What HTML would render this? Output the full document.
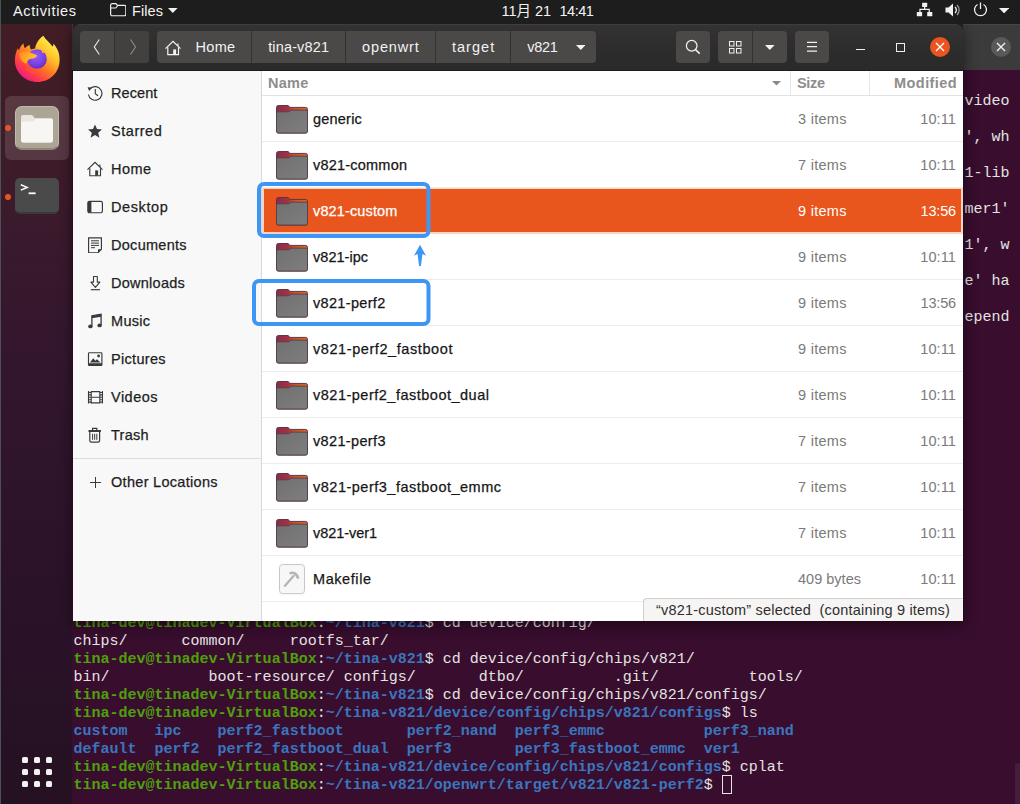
<!DOCTYPE html>
<html><head><meta charset="utf-8"><title>Files</title>
<style>
*{box-sizing:border-box;margin:0;padding:0}
html,body{width:1020px;height:804px;overflow:hidden;background:#380d2e;font-family:"Liberation Sans","Noto Sans CJK SC",sans-serif;}
.abs{position:absolute}
i{font-style:normal}
#topbar{position:absolute;left:0;top:0;width:1020px;height:24px;background:#1d1d1d;color:#f4f4f4;font-size:14.5px;line-height:24px}
#topbar span{position:absolute;top:-1px;white-space:nowrap}
#dock{position:absolute;left:0;top:24px;width:72px;height:780px;background:linear-gradient(180deg,#431d25 0%,#3f1c27 14%,#3a1a2c 26%,#32162e 45%,#2a1228 75%,#251122 100%)}
#edge{position:absolute;left:0;top:0;width:1px;height:804px;background:#4b5158}
#term{position:absolute;left:72px;top:24px;width:948px;height:780px;background:#380d2e}
#termhead{position:absolute;left:0;top:0;width:948px;height:46px;background:#3c3b3b;box-shadow:inset 0 1px 0 rgba(255,255,255,0.06)}
.tl{position:absolute;left:1.6px;white-space:pre;font-family:"Liberation Mono",monospace;font-size:15px;line-height:18px;color:#e4e4e2;height:18px}
.tl b.g{color:#4fa00c}.tl b.b{color:#3b76bd}
.cur{position:absolute;top:-2px;width:10px;height:19px;border:1px solid #e4e4e2}
#win{position:absolute;left:73px;top:24px;width:890px;height:597px;background:#2f2e2e;border-radius:8px 8px 0 0;overflow:hidden;box-shadow:0 3px 14px rgba(0,0,0,0.55)}
#head{position:absolute;left:0;top:0;width:890px;height:47px;background:linear-gradient(180deg,#343232 0%,#2d2c2c 60%,#2b2a2a 100%);border-bottom:1px solid #1c1c1c;box-shadow:inset 0 1px 0 rgba(255,255,255,0.06)}
.hb{position:absolute;top:7px;height:32px;background:#4a4948;border-radius:4px}
.hs{position:absolute;top:7px;width:1px;height:32px;background:#333232}
.ht{position:absolute;top:7px;height:32px;line-height:33px;color:#f2f2f2;font-size:14.5px;white-space:nowrap}
#side{position:absolute;left:0;top:47px;width:189px;height:550px;background:#f8f8f8;border-right:1px solid #d9d9d9}
.sl{position:absolute;left:38px;font-size:14.5px;color:#1e1e1e;white-space:nowrap;line-height:20px;-webkit-text-stroke-width:0.25px}
#list{position:absolute;left:189px;top:47px;width:701px;height:550px;background:#fff}
#colhead{position:absolute;left:0;top:0;width:701px;height:25px;border-bottom:1px solid #e2e2e2;background:#fff}
.ch{position:absolute;top:2px;font-size:14.5px;font-weight:bold;color:#8d8d8d;line-height:20px;white-space:nowrap}
.cd{position:absolute;top:0;width:1px;height:24px;background:#e6e6e6}
.row{position:absolute;left:0;width:701px;height:46px;border-bottom:1px solid #ececec}
.row .n{position:absolute;left:51px;top:13px;font-size:14.5px;line-height:20px;color:#161616;white-space:nowrap;-webkit-text-stroke-width:0.25px}
.row .s{position:absolute;left:536px;top:13px;font-size:14.5px;line-height:20px;color:#7a7a7a;white-space:nowrap}
.row .m{position:absolute;right:7px;top:13px;font-size:14.5px;line-height:20px;color:#7a7a7a;white-space:nowrap}
.row.sel{background:#e9561d;border:1px solid #fbd3c5;border-width:1px 2px 2px 2px}
.row.sel .fi{left:12px;top:8px}
.row.sel .n{left:49px;top:12px}.row.sel .s{left:534px;top:12px}.row.sel .m{right:5px;top:12px}
.row.sel .n,.row.sel .s,.row.sel .m{color:#fff}
.fi{position:absolute;left:14px;top:9px}
#status{position:absolute;left:570px;top:574px;width:320px;height:23px;background:#f6f5f4;border-top:1px solid #cfcfcf;border-left:1px solid #cfcfcf;border-radius:4px 0 0 0;font-size:14.5px;line-height:23px;color:#2e2e2e;padding-left:12px;white-space:nowrap}

</style></head><body>
<div id="term">
<div id="termhead"><div class="abs" style="left:919px;top:13px;width:20px;height:20px;border-radius:10px;background:#5a5959"></div><svg class="abs" style="left:924px;top:18px" width="10" height="10" viewBox="0 0 10 10"><path d="M1 1l8 8M9 1l-8 8" stroke="#f0f0f0" stroke-width="1.4"/></svg></div>
<div class="abs" style="left:943px;top:739px;width:6px;height:42px;border-radius:3px;background:rgba(255,255,255,0.07)"></div>
<div class="tl" style="top:591px"><b class="g">tina-dev@tinadev-VirtualBox</b>:<b class="b">~/tina-v821</b>$ cd device/config/</div>
<div class="tl" style="top:609px">chips/      common/     rootfs_tar/</div>
<div class="tl" style="top:627px"><b class="g">tina-dev@tinadev-VirtualBox</b>:<b class="b">~/tina-v821</b>$ cd device/config/chips/v821/</div>
<div class="tl" style="top:645px">bin/           boot-resource/ configs/       dtbo/          .git/          tools/</div>
<div class="tl" style="top:663px"><b class="g">tina-dev@tinadev-VirtualBox</b>:<b class="b">~/tina-v821</b>$ cd device/config/chips/v821/configs/</div>
<div class="tl" style="top:681px"><b class="g">tina-dev@tinadev-VirtualBox</b>:<b class="b">~/tina-v821/device/config/chips/v821/configs</b>$ ls</div>
<div class="tl" style="top:699px"><b class="b">custom   ipc    perf2_fastboot       perf2_nand  perf3_emmc           perf3_nand</b></div>
<div class="tl" style="top:717px"><b class="b">default  perf2  perf2_fastboot_dual  perf3       perf3_fastboot_emmc  ver1</b></div>
<div class="tl" style="top:735px"><b class="g">tina-dev@tinadev-VirtualBox</b>:<b class="b">~/tina-v821/device/config/chips/v821/configs</b>$ cplat</div>
<div class="tl" style="top:753px"><b class="g">tina-dev@tinadev-VirtualBox</b>:<b class="b">~/tina-v821/openwrt/target/v821/v821-perf2</b>$ <i class="cur"></i></div>
<div class="tl" style="top:69px;left:892.600px">video</div>
<div class="tl" style="top:105px;left:892.600px">', wh</div>
<div class="tl" style="top:141px;left:892.600px">1-lib</div>
<div class="tl" style="top:177px;left:892.600px">mer1'</div>
<div class="tl" style="top:213px;left:892.600px">1', w</div>
<div class="tl" style="top:249px;left:892.600px">e' ha</div>
<div class="tl" style="top:285px;left:892.600px">epend</div>
</div>
<div id="dock">
<svg class="abs" style="left:8px;top:6px" width="58" height="58" viewBox="0 0 58 58"><defs><linearGradient id="ff1" x1="0.85" y1="0.1" x2="0.2" y2="0.95"><stop offset="0" stop-color="#fff14a"/><stop offset="0.3" stop-color="#ffc02c"/><stop offset="0.55" stop-color="#ff7a22"/><stop offset="0.8" stop-color="#ff3a4a"/><stop offset="1" stop-color="#ee168c"/></linearGradient><radialGradient id="ff2" cx="0.45" cy="0.35" r="0.75"><stop offset="0" stop-color="#9a5cf5"/><stop offset="0.6" stop-color="#7a3fe0"/><stop offset="1" stop-color="#5527b8"/></radialGradient><linearGradient id="ff3" x1="0" y1="0" x2="1" y2="0.4"><stop offset="0" stop-color="#ff8420"/><stop offset="0.5" stop-color="#ffa826"/><stop offset="1" stop-color="#ffc832"/></linearGradient></defs><path d="M35.400 5.800C37 9 41 12 44.500 16.500c1-0.500 1-2 0.800-3C49.500 18 52 24 51.600 31 51 43 41.500 52 29.500 52S7.500 43 6.900 31.500C6.700 26 8 21.500 10 18c0.200 1 0.500 2 1 2.500 0.500-2.500 2.500-5.500 4.500-7.200 0 1.800 0.500 3.800 1.500 5 1.200-1.400 3-2.800 4.600-3.500 0 1.500 0.500 3.500 1.500 5 1-0.800 2.500-1.300 4-1.400C27.500 14.500 30.500 9 35.400 5.800z" fill="url(#ff1)"/><circle cx="29" cy="29" r="9.800" fill="url(#ff2)"/><path d="M11 23.500c2.500-2 6.500-2.700 10-1.500 3 1 5.500 2.300 8 3.400-0.300 2-3 3.200-5.800 3.400-2.700 0.400-4.700 2.400-4.900 5-2-0.500-4.500-2.500-5.500-4.500-0.900-2-1.600-4-1.800-5.800z" fill="url(#ff3)"/><path d="M18.300 33.800c0.300 3.500 2.800 6.200 6.500 7.200 3 0.800 6.500 0.300 9-1.500-2.500 3.500-7.500 5-12 3.200-3.500-1.500-5-5-3.500-8.900z" fill="#ff5a2e" opacity="0.55"/><path d="M33 19.500c2.500 0.500 4.500 1.800 5.500 3.500-1.500-0.500-3-0.500-4.200 0-0.200-1.300-0.600-2.500-1.300-3.500z" fill="#ffb52a"/></svg>
<div class="abs" style="left:5px;top:72px;width:64px;height:64px;border-radius:6px;background:rgba(255,255,255,0.125)"></div>
<div class="abs" style="left:15px;top:82px;width:44px;height:44px;border-radius:7px;background:#aca595;border:1.5px solid #c2bbad;border-bottom:2px solid #8f8778"></div>
<svg class="abs" style="left:20px;top:89.500px" width="34" height="29.500" viewBox="0 0 34 28" preserveAspectRatio="none"><path d="M1 3a2 2 0 0 1 2-2h9l3 3h16a2 2 0 0 1 2 2v19a2 2 0 0 1-2 2h-28a2 2 0 0 1-2-2z" fill="#e9e6df"/><path d="M1 9a2 2 0 0 1 2-2h10l3-2.500h15a2 2 0 0 1 2 2v18.500a2 2 0 0 1-2 2h-28a2 2 0 0 1-2-2z" fill="#f7f6f3"/></svg>
<div class="abs" style="left:5px;top:101px;width:6px;height:6px;border-radius:3px;background:#e95420"></div>
<div class="abs" style="left:15px;top:154px;width:44px;height:36px;border-radius:5px;background:#4b4a4a;border-bottom:2px solid #3a3939"></div>
<svg class="abs" style="left:20px;top:159px" width="20" height="14" viewBox="0 0 20 14"><path d="M0.800 1.700l6.400 2.700-6.400 2.700" fill="none" stroke="#fff" stroke-width="1.500"/><path d="M8.600 10.300h7" stroke="#fff" stroke-width="1.800"/></svg>
<div class="abs" style="left:5px;top:169.500px;width:6px;height:6px;border-radius:3px;background:#e95420"></div>
<svg class="abs" style="left:22px;top:733px" width="30" height="30" viewBox="0 0 30 30"><rect x="0" y="0" width="6" height="6" rx="1.500" fill="#f2f2f2"/><rect x="12" y="0" width="6" height="6" rx="1.500" fill="#f2f2f2"/><rect x="24" y="0" width="6" height="6" rx="1.500" fill="#f2f2f2"/><rect x="0" y="12" width="6" height="6" rx="1.500" fill="#f2f2f2"/><rect x="12" y="12" width="6" height="6" rx="1.500" fill="#f2f2f2"/><rect x="24" y="12" width="6" height="6" rx="1.500" fill="#f2f2f2"/><rect x="0" y="24" width="6" height="6" rx="1.500" fill="#f2f2f2"/><rect x="12" y="24" width="6" height="6" rx="1.500" fill="#f2f2f2"/><rect x="24" y="24" width="6" height="6" rx="1.500" fill="#f2f2f2"/></svg>
</div>
<div class="abs" style="left:73px;top:24px;width:890px;height:12px;background:#232323"></div>
<div id="win">
<div id="head">
<div class="hb" style="left:7px;width:69px"></div><div class="hb" style="left:42px;width:34px;background:#424140;border-radius:0 4px 4px 0"></div><i class="hs" style="left:41px"></i>
<svg class="abs" style="left:7px;top:7px" width="69" height="32" viewBox="0 0 69 32"><path d="M19.300 8.500L14.300 16l5 7.500" fill="none" stroke="#f0f0f0" stroke-width="1.1"/><path d="M50.500 8.500l5 7.500-5 7.500" fill="none" stroke="#8a8a8a" stroke-width="1.1"/></svg>
<div class="hb" style="left:84px;width:439px"></div>
<i class="hs" style="left:178px"></i>
<i class="hs" style="left:272px"></i>
<i class="hs" style="left:362px"></i>
<i class="hs" style="left:437px"></i>
<svg class="abs" style="left:92px;top:15.500px" width="16" height="16" viewBox="0 0 16 16"><path d="M0.500 8.600L8 1.300l7.500 7.300" fill="none" stroke="#f4f4f4" stroke-width="1.200"/><path d="M2.800 7.200V14.700h10.700V7.200" fill="none" stroke="#f4f4f4" stroke-width="1.200"/><path d="M12.900 6V3.400" stroke="#f4f4f4" stroke-width="1.100"/><rect x="8.200" y="9.400" width="2.900" height="5.300" fill="#f4f4f4"/></svg>
<span class="ht" style="left:122.5px;letter-spacing:0.30px">Home</span>
<span class="ht" style="left:195.2px;letter-spacing:0.14px">tina-v821</span>
<span class="ht" style="left:289.1px;letter-spacing:0.85px">openwrt</span>
<span class="ht" style="left:378.9px;letter-spacing:1.06px">target</span>
<span class="ht" style="left:454.2px;letter-spacing:-0.28px">v821</span>
<svg class="abs" style="left:502.500px;top:21px" width="9.600" height="4.900" viewBox="0 0 11 6" preserveAspectRatio="none"><path d="M0 0h11L5.500 6z" fill="#f4f4f4"/></svg>
<div class="hb" style="left:603px;width:34px"></div>
<svg class="abs" style="left:611px;top:14px" width="18" height="18" viewBox="0 0 18 18"><circle cx="7.700" cy="7.700" r="5.300" fill="none" stroke="#f0f0f0" stroke-width="1.250"/><path d="M11.500 11.600L15.700 15.600" stroke="#f0f0f0" stroke-width="1.500"/></svg>
<div class="hb" style="left:645px;width:69px"></div><i class="hs" style="left:679px"></i>
<svg class="abs" style="left:656px;top:17px" width="14" height="14" viewBox="0 0 14 14"><g fill="none" stroke="#f0f0f0" stroke-width="1"><rect x="0.500" y="0.500" width="4.500" height="4.500"/><rect x="7.500" y="0.500" width="4.500" height="4.500"/><rect x="0.500" y="7.500" width="4.500" height="4.500"/><rect x="7.500" y="7.500" width="4.500" height="4.500"/></g></svg>
<svg class="abs" style="left:692px;top:21px" width="9.600" height="4.900" viewBox="0 0 11 6" preserveAspectRatio="none"><path d="M0 0h11L5.500 6z" fill="#f4f4f4"/></svg>
<div class="hb" style="left:722px;width:34px"></div>
<svg class="abs" style="left:734px;top:17px" width="10" height="12" viewBox="0 0 10 12"><path d="M0 1.300h10M0 5.700h10M0 10.100h10" stroke="#f0f0f0" stroke-width="1.200"/></svg>
<div class="abs" style="left:783px;top:25px;width:9px;height:1px;background:#f0f0f0"></div>
<div class="abs" style="left:823px;top:19px;width:9px;height:9px;border:1px solid #f0f0f0"></div>
<div class="abs" style="left:857px;top:13px;width:20px;height:20px;border-radius:10px;background:#e95420"></div>
<svg class="abs" style="left:862px;top:18px" width="10" height="10" viewBox="0 0 10 10"><path d="M1 1l8 8M9 1l-8 8" stroke="#fff" stroke-width="1.4"/></svg>
</div>
<div id="side">
<svg class="abs" style="left:14px;top:13.5px" width="16" height="16" viewBox="0 0 16 16"><path d="M3.300 3.600A6.800 6.800 0 1 1 1.400 9.500" fill="none" stroke="#3a3a3a" stroke-width="1.150"/><path d="M8.300 4v4.600l2.700 2.100" fill="none" stroke="#3a3a3a" stroke-width="1.150"/><path d="M0.600 2.200l4.600 0.300-3.100 3.500z" fill="#3a3a3a"/></svg><span class="sl" style="top:11.5px;letter-spacing:0.09px">Recent</span>
<svg class="abs" style="left:14px;top:51.5px" width="16" height="16" viewBox="0 0 16 16"><path d="M8 1.400l2 4.700 5 0.400-3.800 3.300 1.200 4.900L8 12.100 3.600 14.700l1.200-4.900L1 6.500l5-0.400z" fill="#3a3a3a"/></svg><span class="sl" style="top:49.5px;letter-spacing:0.54px">Starred</span>
<svg class="abs" style="left:14px;top:89.5px" width="16" height="16" viewBox="0 0 16 16"><path d="M0.500 8.600L8 1.300l7.500 7.300" fill="none" stroke="#3a3a3a" stroke-width="1.150"/><path d="M2.800 7.200V14.700h10.700V7.200" fill="none" stroke="#3a3a3a" stroke-width="1.150"/><path d="M12.900 6V3.400" stroke="#3a3a3a" stroke-width="1.100"/><rect x="8.200" y="9.400" width="2.900" height="5.300" fill="#3a3a3a"/></svg><span class="sl" style="top:87.5px;letter-spacing:0.50px">Home</span>
<svg class="abs" style="left:14px;top:127.5px" width="16" height="16" viewBox="0 0 16 16"><rect x="0.800" y="2.300" width="14.600" height="11.400" rx="1.600" fill="none" stroke="#3a3a3a" stroke-width="1.150"/><path d="M1 3.500a1 1 0 0 1 1-1h2.400v11h-2.400a1 1 0 0 1-1-1z" fill="#3a3a3a"/></svg><span class="sl" style="top:125.5px;letter-spacing:0.60px">Desktop</span>
<svg class="abs" style="left:14px;top:165.5px" width="16" height="16" viewBox="0 0 16 16"><path d="M1.600 0.800h12.800v11.500l-3.400 3.400h-9.400z" fill="none" stroke="#3a3a3a" stroke-width="1.150"/><path d="M4 3.800h8M4 6.100h8M4 8.400h8M4 10.700h4" stroke="#3a3a3a" stroke-width="1"/><path d="M14.400 12.300h-3.400v3.400z" fill="#3a3a3a"/></svg><span class="sl" style="top:163.5px;letter-spacing:0.28px">Documents</span>
<svg class="abs" style="left:14px;top:203.5px" width="16" height="16" viewBox="0 0 16 16"><path d="M6.500 1.500h3.800v5.600h2.600L8.400 12.400 3.900 7.100h2.600z" fill="none" stroke="#3a3a3a" stroke-width="1.100" stroke-linejoin="round"/><path d="M3.800 14.700h9.200" stroke="#3a3a3a" stroke-width="1.150"/></svg><span class="sl" style="top:201.5px;letter-spacing:0.26px">Downloads</span>
<svg class="abs" style="left:14px;top:241.5px" width="16" height="16" viewBox="0 0 16 16"><path d="M4.900 13V2.700l9.200-1.500V12" fill="none" stroke="#3a3a3a" stroke-width="1.300"/><path d="M4.900 2.700l9.200-1.500v2.600l-9.200 1.500z" fill="#3a3a3a"/><ellipse cx="3.400" cy="13.400" rx="2.200" ry="1.900" fill="#3a3a3a"/><ellipse cx="12.600" cy="12.400" rx="2.200" ry="1.900" fill="#3a3a3a"/></svg><span class="sl" style="top:239.5px;letter-spacing:0.31px">Music</span>
<svg class="abs" style="left:14px;top:279.5px" width="16" height="16" viewBox="0 0 16 16"><rect x="1.500" y="1.700" width="13.400" height="12.800" rx="0.800" fill="none" stroke="#3a3a3a" stroke-width="1.150"/><path d="M1.500 12.200h13.400v2.300h-13.400z" fill="#3a3a3a"/><path d="M3 11.500l3.200-4.300 2.200 2.500 1.500-1.500 3.600 3.300z" fill="#3a3a3a"/><circle cx="11.600" cy="5" r="1.400" fill="#3a3a3a"/></svg><span class="sl" style="top:277.5px;letter-spacing:0.32px">Pictures</span>
<svg class="abs" style="left:14px;top:317.5px" width="16" height="16" viewBox="0 0 16 16"><path d="M1.500 2v12.500M15.500 2v12.500M4.200 2v12.500M12.800 2v12.500" stroke="#3a3a3a" stroke-width="1.100"/><path d="M4.200 2.600h8.600M4.200 8.200h8.600M4.200 13.900h8.600" stroke="#3a3a3a" stroke-width="1.150"/><path d="M1.500 3.500h2.700M1.500 5.900h2.700M1.500 8.300h2.700M1.500 10.700h2.700M1.500 13.100h2.700M12.800 3.500h2.700M12.800 5.900h2.700M12.800 8.300h2.700M12.800 10.700h2.700M12.800 13.100h2.700" stroke="#3a3a3a" stroke-width="1.100"/></svg><span class="sl" style="top:315.5px;letter-spacing:0.48px">Videos</span>
<svg class="abs" style="left:14px;top:355.5px" width="16" height="16" viewBox="0 0 16 16"><path d="M2.800 5v8.600a1.600 1.600 0 0 0 1.600 1.600h6.600a1.600 1.600 0 0 0 1.600-1.600V5" fill="none" stroke="#3a3a3a" stroke-width="1.200"/><path d="M1.500 4h12.400" stroke="#3a3a3a" stroke-width="2"/><path d="M5.600 3.200V1.400h4.200v1.800" fill="none" stroke="#3a3a3a" stroke-width="1.200"/><path d="M5.600 6.800v6M7.700 6.800v6M9.800 6.800v6" stroke="#3a3a3a" stroke-width="1"/></svg><span class="sl" style="top:353.5px;letter-spacing:0.24px">Trash</span>
<div class="abs" style="left:0;top:387px;width:188px;height:1px;background:#dcdcdc"></div>
<svg class="abs" style="left:14px;top:403.0px" width="16" height="16" viewBox="0 0 16 16"><path d="M8.500 3v11M3 8.500h11" stroke="#3a3a3a" stroke-width="1"/></svg><span class="sl" style="top:400.5px;letter-spacing:0.30px">Other Locations</span>
</div>
<div id="list">
<div id="colhead"><span class="ch" style="left:6px;letter-spacing:0.27px">Name</span><svg class="abs" style="left:509.500px;top:10.300px" width="9" height="4.600" viewBox="0 0 10 5" preserveAspectRatio="none"><path d="M0 0h10l-5 5z" fill="#8a8a8a"/></svg><i class="cd" style="left:528px"></i><span class="ch" style="left:535px;letter-spacing:-0.31px">Size</span><i class="cd" style="left:607px"></i><span class="ch" style="right:6px;letter-spacing:0.41px">Modified</span></div>
<div class="row" style="top:25px"><svg class="fi" viewBox="0 0 32 30" width="32" height="29" preserveAspectRatio="none"><defs><linearGradient id="t0" x1="0" y1="0" x2="1" y2="0"><stop offset="0" stop-color="#8a2a50"/><stop offset="0.38" stop-color="#a5323f"/><stop offset="0.55" stop-color="#c8502c"/><stop offset="1" stop-color="#e8651f"/></linearGradient><linearGradient id="b0" x1="0" y1="0" x2="1" y2="1"><stop offset="0" stop-color="#707070"/><stop offset="1" stop-color="#7e7e7e"/></linearGradient></defs><path d="M2.5 0.5h9.5l2 2h15.5a2 2 0 0 1 2 2v22.5a2 2 0 0 1-2 2h-27a2 2 0 0 1-2-2v-24.5a2 2 0 0 1 2-2z" fill="url(#t0)" stroke="#5b3440" stroke-width="1"/><path d="M0.5 8.5a1.5 1.5 0 0 1 1.5-1.5h11l2-1.7h15a1.5 1.5 0 0 1 1.5 1.5v20.2a2 2 0 0 1-2 2h-27a2 2 0 0 1-2-2z" fill="url(#b0)" stroke="#57424a" stroke-width="1"/></svg><span class="n" style="letter-spacing:0.21px">generic</span><span class="s" style="letter-spacing:0.29px">3 items</span><span class="m" style="letter-spacing:0.10px">10:11</span></div>
<div class="row" style="top:71px"><svg class="fi" viewBox="0 0 32 30" width="32" height="29" preserveAspectRatio="none"><defs><linearGradient id="t1" x1="0" y1="0" x2="1" y2="0"><stop offset="0" stop-color="#8a2a50"/><stop offset="0.38" stop-color="#a5323f"/><stop offset="0.55" stop-color="#c8502c"/><stop offset="1" stop-color="#e8651f"/></linearGradient><linearGradient id="b1" x1="0" y1="0" x2="1" y2="1"><stop offset="0" stop-color="#707070"/><stop offset="1" stop-color="#7e7e7e"/></linearGradient></defs><path d="M2.5 0.5h9.5l2 2h15.5a2 2 0 0 1 2 2v22.5a2 2 0 0 1-2 2h-27a2 2 0 0 1-2-2v-24.5a2 2 0 0 1 2-2z" fill="url(#t1)" stroke="#5b3440" stroke-width="1"/><path d="M0.5 8.5a1.5 1.5 0 0 1 1.5-1.5h11l2-1.7h15a1.5 1.5 0 0 1 1.5 1.5v20.2a2 2 0 0 1-2 2h-27a2 2 0 0 1-2-2z" fill="url(#b1)" stroke="#57424a" stroke-width="1"/></svg><span class="n" style="letter-spacing:0.21px">v821-common</span><span class="s" style="letter-spacing:0.29px">7 items</span><span class="m" style="letter-spacing:0.10px">10:11</span></div>
<div class="row sel" style="top:117px"><svg class="fi" viewBox="0 0 32 30" width="32" height="29" preserveAspectRatio="none"><defs><linearGradient id="t2" x1="0" y1="0" x2="1" y2="0"><stop offset="0" stop-color="#8a2a50"/><stop offset="0.38" stop-color="#a5323f"/><stop offset="0.55" stop-color="#c8502c"/><stop offset="1" stop-color="#e8651f"/></linearGradient><linearGradient id="b2" x1="0" y1="0" x2="1" y2="1"><stop offset="0" stop-color="#707070"/><stop offset="1" stop-color="#7e7e7e"/></linearGradient></defs><path d="M2.5 0.5h9.5l2 2h15.5a2 2 0 0 1 2 2v22.5a2 2 0 0 1-2 2h-27a2 2 0 0 1-2-2v-24.5a2 2 0 0 1 2-2z" fill="url(#t2)" stroke="#5b3440" stroke-width="1"/><path d="M0.5 8.5a1.5 1.5 0 0 1 1.5-1.5h11l2-1.7h15a1.5 1.5 0 0 1 1.5 1.5v20.2a2 2 0 0 1-2 2h-27a2 2 0 0 1-2-2z" fill="url(#b2)" stroke="#57424a" stroke-width="1"/></svg><span class="n" style="letter-spacing:0.13px">v821-custom</span><span class="s" style="letter-spacing:0.29px">9 items</span><span class="m" style="letter-spacing:-0.17px">13:56</span></div>
<div class="row" style="top:163px"><svg class="fi" viewBox="0 0 32 30" width="32" height="29" preserveAspectRatio="none"><defs><linearGradient id="t3" x1="0" y1="0" x2="1" y2="0"><stop offset="0" stop-color="#8a2a50"/><stop offset="0.38" stop-color="#a5323f"/><stop offset="0.55" stop-color="#c8502c"/><stop offset="1" stop-color="#e8651f"/></linearGradient><linearGradient id="b3" x1="0" y1="0" x2="1" y2="1"><stop offset="0" stop-color="#707070"/><stop offset="1" stop-color="#7e7e7e"/></linearGradient></defs><path d="M2.5 0.5h9.5l2 2h15.5a2 2 0 0 1 2 2v22.5a2 2 0 0 1-2 2h-27a2 2 0 0 1-2-2v-24.5a2 2 0 0 1 2-2z" fill="url(#t3)" stroke="#5b3440" stroke-width="1"/><path d="M0.5 8.5a1.5 1.5 0 0 1 1.5-1.5h11l2-1.7h15a1.5 1.5 0 0 1 1.5 1.5v20.2a2 2 0 0 1-2 2h-27a2 2 0 0 1-2-2z" fill="url(#b3)" stroke="#57424a" stroke-width="1"/></svg><span class="n" style="letter-spacing:0.04px">v821-ipc</span><span class="s" style="letter-spacing:0.29px">9 items</span><span class="m" style="letter-spacing:0.10px">10:11</span></div>
<div class="row" style="top:209px"><svg class="fi" viewBox="0 0 32 30" width="32" height="29" preserveAspectRatio="none"><defs><linearGradient id="t4" x1="0" y1="0" x2="1" y2="0"><stop offset="0" stop-color="#8a2a50"/><stop offset="0.38" stop-color="#a5323f"/><stop offset="0.55" stop-color="#c8502c"/><stop offset="1" stop-color="#e8651f"/></linearGradient><linearGradient id="b4" x1="0" y1="0" x2="1" y2="1"><stop offset="0" stop-color="#707070"/><stop offset="1" stop-color="#7e7e7e"/></linearGradient></defs><path d="M2.5 0.5h9.5l2 2h15.5a2 2 0 0 1 2 2v22.5a2 2 0 0 1-2 2h-27a2 2 0 0 1-2-2v-24.5a2 2 0 0 1 2-2z" fill="url(#t4)" stroke="#5b3440" stroke-width="1"/><path d="M0.5 8.5a1.5 1.5 0 0 1 1.5-1.5h11l2-1.7h15a1.5 1.5 0 0 1 1.5 1.5v20.2a2 2 0 0 1-2 2h-27a2 2 0 0 1-2-2z" fill="url(#b4)" stroke="#57424a" stroke-width="1"/></svg><span class="n" style="letter-spacing:0.33px">v821-perf2</span><span class="s" style="letter-spacing:0.29px">9 items</span><span class="m" style="letter-spacing:-0.17px">13:56</span></div>
<div class="row" style="top:255px"><svg class="fi" viewBox="0 0 32 30" width="32" height="29" preserveAspectRatio="none"><defs><linearGradient id="t5" x1="0" y1="0" x2="1" y2="0"><stop offset="0" stop-color="#8a2a50"/><stop offset="0.38" stop-color="#a5323f"/><stop offset="0.55" stop-color="#c8502c"/><stop offset="1" stop-color="#e8651f"/></linearGradient><linearGradient id="b5" x1="0" y1="0" x2="1" y2="1"><stop offset="0" stop-color="#707070"/><stop offset="1" stop-color="#7e7e7e"/></linearGradient></defs><path d="M2.5 0.5h9.5l2 2h15.5a2 2 0 0 1 2 2v22.5a2 2 0 0 1-2 2h-27a2 2 0 0 1-2-2v-24.5a2 2 0 0 1 2-2z" fill="url(#t5)" stroke="#5b3440" stroke-width="1"/><path d="M0.5 8.5a1.5 1.5 0 0 1 1.5-1.5h11l2-1.7h15a1.5 1.5 0 0 1 1.5 1.5v20.2a2 2 0 0 1-2 2h-27a2 2 0 0 1-2-2z" fill="url(#b5)" stroke="#57424a" stroke-width="1"/></svg><span class="n" style="letter-spacing:0.58px">v821-perf2_fastboot</span><span class="s" style="letter-spacing:0.29px">9 items</span><span class="m" style="letter-spacing:0.10px">10:11</span></div>
<div class="row" style="top:301px"><svg class="fi" viewBox="0 0 32 30" width="32" height="29" preserveAspectRatio="none"><defs><linearGradient id="t6" x1="0" y1="0" x2="1" y2="0"><stop offset="0" stop-color="#8a2a50"/><stop offset="0.38" stop-color="#a5323f"/><stop offset="0.55" stop-color="#c8502c"/><stop offset="1" stop-color="#e8651f"/></linearGradient><linearGradient id="b6" x1="0" y1="0" x2="1" y2="1"><stop offset="0" stop-color="#707070"/><stop offset="1" stop-color="#7e7e7e"/></linearGradient></defs><path d="M2.5 0.5h9.5l2 2h15.5a2 2 0 0 1 2 2v22.5a2 2 0 0 1-2 2h-27a2 2 0 0 1-2-2v-24.5a2 2 0 0 1 2-2z" fill="url(#t6)" stroke="#5b3440" stroke-width="1"/><path d="M0.5 8.5a1.5 1.5 0 0 1 1.5-1.5h11l2-1.7h15a1.5 1.5 0 0 1 1.5 1.5v20.2a2 2 0 0 1-2 2h-27a2 2 0 0 1-2-2z" fill="url(#b6)" stroke="#57424a" stroke-width="1"/></svg><span class="n" style="letter-spacing:0.50px">v821-perf2_fastboot_dual</span><span class="s" style="letter-spacing:0.29px">9 items</span><span class="m" style="letter-spacing:0.10px">10:11</span></div>
<div class="row" style="top:347px"><svg class="fi" viewBox="0 0 32 30" width="32" height="29" preserveAspectRatio="none"><defs><linearGradient id="t7" x1="0" y1="0" x2="1" y2="0"><stop offset="0" stop-color="#8a2a50"/><stop offset="0.38" stop-color="#a5323f"/><stop offset="0.55" stop-color="#c8502c"/><stop offset="1" stop-color="#e8651f"/></linearGradient><linearGradient id="b7" x1="0" y1="0" x2="1" y2="1"><stop offset="0" stop-color="#707070"/><stop offset="1" stop-color="#7e7e7e"/></linearGradient></defs><path d="M2.5 0.5h9.5l2 2h15.5a2 2 0 0 1 2 2v22.5a2 2 0 0 1-2 2h-27a2 2 0 0 1-2-2v-24.5a2 2 0 0 1 2-2z" fill="url(#t7)" stroke="#5b3440" stroke-width="1"/><path d="M0.5 8.5a1.5 1.5 0 0 1 1.5-1.5h11l2-1.7h15a1.5 1.5 0 0 1 1.5 1.5v20.2a2 2 0 0 1-2 2h-27a2 2 0 0 1-2-2z" fill="url(#b7)" stroke="#57424a" stroke-width="1"/></svg><span class="n" style="letter-spacing:0.35px">v821-perf3</span><span class="s" style="letter-spacing:0.29px">7 items</span><span class="m" style="letter-spacing:0.10px">10:11</span></div>
<div class="row" style="top:393px"><svg class="fi" viewBox="0 0 32 30" width="32" height="29" preserveAspectRatio="none"><defs><linearGradient id="t8" x1="0" y1="0" x2="1" y2="0"><stop offset="0" stop-color="#8a2a50"/><stop offset="0.38" stop-color="#a5323f"/><stop offset="0.55" stop-color="#c8502c"/><stop offset="1" stop-color="#e8651f"/></linearGradient><linearGradient id="b8" x1="0" y1="0" x2="1" y2="1"><stop offset="0" stop-color="#707070"/><stop offset="1" stop-color="#7e7e7e"/></linearGradient></defs><path d="M2.5 0.5h9.5l2 2h15.5a2 2 0 0 1 2 2v22.5a2 2 0 0 1-2 2h-27a2 2 0 0 1-2-2v-24.5a2 2 0 0 1 2-2z" fill="url(#t8)" stroke="#5b3440" stroke-width="1"/><path d="M0.5 8.5a1.5 1.5 0 0 1 1.5-1.5h11l2-1.7h15a1.5 1.5 0 0 1 1.5 1.5v20.2a2 2 0 0 1-2 2h-27a2 2 0 0 1-2-2z" fill="url(#b8)" stroke="#57424a" stroke-width="1"/></svg><span class="n" style="letter-spacing:0.50px">v821-perf3_fastboot_emmc</span><span class="s" style="letter-spacing:0.29px">7 items</span><span class="m" style="letter-spacing:0.10px">10:11</span></div>
<div class="row" style="top:439px"><svg class="fi" viewBox="0 0 32 30" width="32" height="29" preserveAspectRatio="none"><defs><linearGradient id="t9" x1="0" y1="0" x2="1" y2="0"><stop offset="0" stop-color="#8a2a50"/><stop offset="0.38" stop-color="#a5323f"/><stop offset="0.55" stop-color="#c8502c"/><stop offset="1" stop-color="#e8651f"/></linearGradient><linearGradient id="b9" x1="0" y1="0" x2="1" y2="1"><stop offset="0" stop-color="#707070"/><stop offset="1" stop-color="#7e7e7e"/></linearGradient></defs><path d="M2.5 0.5h9.5l2 2h15.5a2 2 0 0 1 2 2v22.5a2 2 0 0 1-2 2h-27a2 2 0 0 1-2-2v-24.5a2 2 0 0 1 2-2z" fill="url(#t9)" stroke="#5b3440" stroke-width="1"/><path d="M0.5 8.5a1.5 1.5 0 0 1 1.5-1.5h11l2-1.7h15a1.5 1.5 0 0 1 1.5 1.5v20.2a2 2 0 0 1-2 2h-27a2 2 0 0 1-2-2z" fill="url(#b9)" stroke="#57424a" stroke-width="1"/></svg><span class="n" style="letter-spacing:-0.05px">v821-ver1</span><span class="s" style="letter-spacing:0.29px">7 items</span><span class="m" style="letter-spacing:0.10px">10:11</span></div>
<div class="row" style="top:485px"><svg class="fi" style="left:17px;top:7.600px" viewBox="0 0 27 31" width="27" height="31"><rect x="0.500" y="0.500" width="25" height="29.200" rx="3.200" fill="#f7f7f7" stroke="#c6c6c6"/><path d="M6 21.800L14.500 12" fill="none" stroke="#b4b4b4" stroke-width="2.300" stroke-linecap="round"/><path d="M10.700 9.800C13.500 7.600 17.500 9 19.300 14.600" fill="none" stroke="#b4b4b4" stroke-width="2.600"/></svg><span class="n" style="letter-spacing:0.57px">Makefile</span><span class="s" style="letter-spacing:0.01px">409 bytes</span><span class="m" style="letter-spacing:0.10px">10:11</span></div>
</div>
<div id="status" style="letter-spacing:0.20px">“v821-custom” selected&nbsp; (containing 9 items)</div>
</div>
<svg class="abs" style="left:250px;top:178px" width="190" height="152" viewBox="250 178 190 152"><rect x="259" y="184" width="169.500" height="52" rx="5" fill="none" stroke="#3e96f4" stroke-width="4"/><rect x="254" y="281" width="174.500" height="43" rx="5" fill="none" stroke="#3e96f4" stroke-width="4"/><path d="M420 244.800L426 255.800 422.500 253.900 420.900 266H419.100L417.500 253.900 414 255.800z" fill="#3e96f4"/></svg>
<div id="topbar">
<span style="left:13px;letter-spacing:0.64px">Activities</span>
<svg class="abs" style="left:109.600px;top:3px" width="16.500" height="14.200" viewBox="0 0 18 14.800" preserveAspectRatio="none"><path d="M0.7 2.200a1.500 1.500 0 0 1 1.500-1.500h4.300l1.500 1.800h7.800a1.500 1.500 0 0 1 1.500 1.500v7.800a1.500 1.500 0 0 1-1.500 1.500h-13.600a1.500 1.500 0 0 1-1.500-1.500z" fill="none" stroke="#f2f2f2" stroke-width="1.3"/><path d="M0.700 5.300h5.600l2-2.300" fill="none" stroke="#f2f2f2" stroke-width="1.100"/></svg>
<span style="left:132px;letter-spacing:0.07px">Files</span>
<svg class="abs" style="left:168.200px;top:8.400px" width="9.600" height="5" viewBox="0 0 10 6" preserveAspectRatio="none"><path d="M0 0h10l-5 6z" fill="#f2f2f2"/></svg>
<span style="left:501.500px;letter-spacing:-0.02px">11月 21</span><span style="left:559.500px;letter-spacing:-0.47px">14:41</span>
<svg class="abs" style="left:916px;top:2px" width="17" height="15" viewBox="0 0 17 15"><rect x="6.100" y="0.800" width="5.100" height="4.100" rx="0.500" fill="#f2f2f2"/><path d="M8.650 4.900v2.500M3.950 10.200V7.450h9.300V10.200" fill="none" stroke="#f2f2f2" stroke-width="1.200"/><rect x="0.800" y="10.100" width="5.300" height="4.100" rx="0.500" fill="#f2f2f2"/><rect x="11.200" y="10.100" width="5.100" height="4.100" rx="0.500" fill="#f2f2f2"/></svg>
<svg class="abs" style="left:945px;top:3px" width="16" height="14" viewBox="0 0 16 14"><path d="M0.500 4.500h3L8 0.500v13L3.500 9.500h-3z" fill="#f2f2f2"/><path d="M10 4a4 4 0 0 1 0 6" fill="none" stroke="#f2f2f2" stroke-width="1.3"/><path d="M12 2a7 7 0 0 1 0 10" fill="none" stroke="#9a9a9a" stroke-width="1.300"/></svg>
<svg class="abs" style="left:973px;top:2px" width="15" height="15" viewBox="0 0 15 15"><path d="M4.500 2.500a6 6 0 1 0 6 0" fill="none" stroke="#f2f2f2" stroke-width="1.300"/><path d="M7.500 0.500v6.500" stroke="#f2f2f2" stroke-width="1.300"/></svg>
<svg class="abs" style="left:998.800px;top:7.900px" width="10.200" height="5.400" viewBox="0 0 10 6" preserveAspectRatio="none"><path d="M0 0h10l-5 6z" fill="#f2f2f2"/></svg>
</div>
<div id="edge"></div>
</body></html>
